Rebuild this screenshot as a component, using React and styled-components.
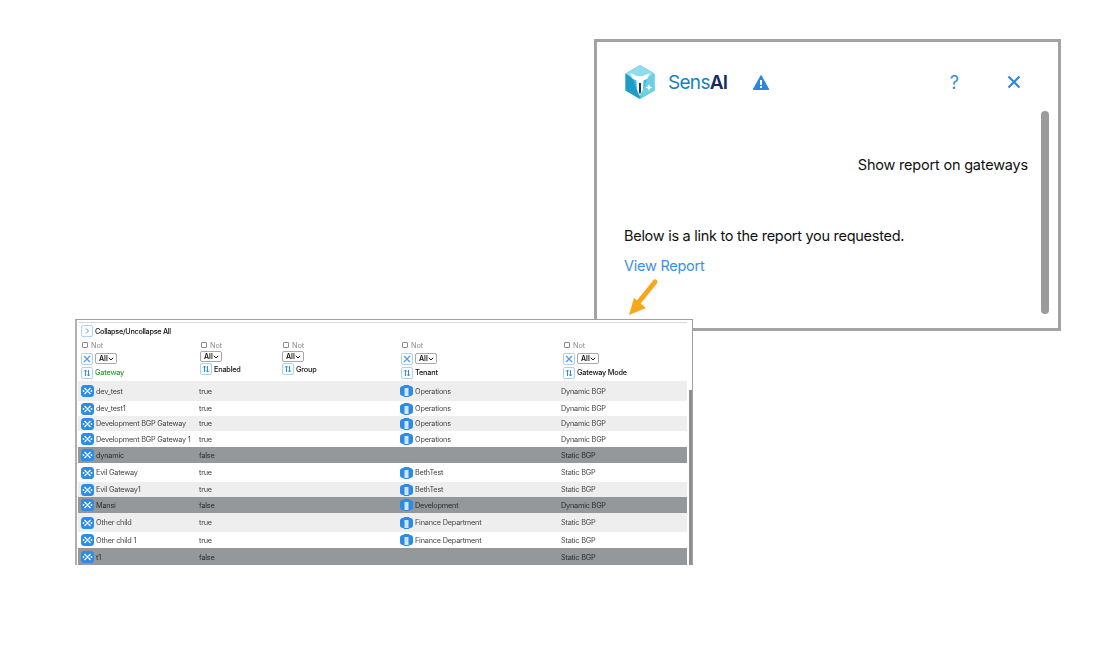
import React from "react";
import styled, { createGlobalStyle } from "styled-components";

const GATEWAYS = [
  { name: "dev_test", enabled: "true", tenant: "Operations", mode: "Dynamic BGP", h: 20, tone: "light" },
  { name: "dev_test1", enabled: "true", tenant: "Operations", mode: "Dynamic BGP", h: 15, tone: "white" },
  { name: "Development BGP Gateway", enabled: "true", tenant: "Operations", mode: "Dynamic BGP", h: 15, tone: "light" },
  { name: "Development BGP Gateway 1", enabled: "true", tenant: "Operations", mode: "Dynamic BGP", h: 16, tone: "white" },
  { name: "dynamic", enabled: "false", tenant: "", mode: "Static BGP", h: 16, tone: "dark" },
  { name: "Evil Gateway", enabled: "true", tenant: "BethTest", mode: "Static BGP", h: 19, tone: "white" },
  { name: "Evil Gateway1", enabled: "true", tenant: "BethTest", mode: "Static BGP", h: 15, tone: "light" },
  { name: "Mansi", enabled: "false", tenant: "Development", mode: "Dynamic BGP", h: 16, tone: "dark" },
  { name: "Other child", enabled: "true", tenant: "Finance Department", mode: "Static BGP", h: 19, tone: "light" },
  { name: "Other child 1", enabled: "true", tenant: "Finance Department", mode: "Static BGP", h: 16, tone: "white" },
  { name: "t1", enabled: "false", tenant: "", mode: "Static BGP", h: 18, tone: "dark" },
];

const TONES = { light: "#eeeeee", white: "#ffffff", dark: "#95989a" };
const COLUMNS = "121px 82px 118px 162px 126px";

const GlobalStyle = createGlobalStyle`
  html, body {
    margin: 0;
    background: #ffffff;
    font-family: Inter, "Liberation Sans", sans-serif;
  }
`;

const Page = styled.div`
  position: relative;
  box-sizing: border-box;
  width: 1113px;
  height: 656px;
  padding: 39px 0 0 594px;
  overflow: hidden;
`;

const Panel = styled.section`
  position: relative;
  box-sizing: border-box;
  width: 467px;
  height: 292px;
  border: 3px solid #a3a3a3;
  padding: 23px 30px 0 27px;
  background: #ffffff;
`;

const Header = styled.header`
  display: flex;
  align-items: center;
  height: 34px;
`;

const LogoMark = styled.svg`
  flex: none;
  width: 30px;
  height: 34px;
  margin-left: 1px;
`;

const Brand = styled.div`
  margin-left: 13px;
  font-size: 19px;
  letter-spacing: -0.7px;
  color: #0f86b8;
`;

const BrandStrong = styled.span`
  font-weight: 600;
  color: #1b2a5c;
`;

const Warning = styled.svg`
  width: 16px;
  height: 15px;
  margin-left: 26px;
`;

const Help = styled.span`
  margin-left: auto;
  font-size: 18px;
  color: #2f8fe0;
`;

const Close = styled.svg`
  width: 14px;
  height: 14px;
  margin-left: 48px;
  margin-right: 7px;
`;

const Request = styled.p`
  margin: 57px 0 0;
  text-align: right;
  font-size: 14.5px;
  line-height: 18px;
  letter-spacing: -0.2px;
  color: #111111;
`;

const Answer = styled.p`
  margin: 53px 0 0;
  font-size: 14.5px;
  line-height: 18px;
  letter-spacing: -0.28px;
  color: #111111;
`;

const ReportLink = styled.a`
  display: block;
  margin-top: 12px;
  font-size: 14.5px;
  line-height: 18px;
  letter-spacing: -0.25px;
  color: #3b8fe3;
`;

const Scrollbar = styled.div`
  position: absolute;
  left: 444px;
  top: 69px;
  width: 8px;
  height: 203px;
  border-radius: 4px;
  background: #9b9b9b;
`;

const Pointer = styled.svg`
  position: absolute;
  left: 624px;
  top: 276px;
  width: 38px;
  height: 44px;
`;

const Shot = styled.figure`
  position: absolute;
  left: 75px;
  top: 319px;
  box-sizing: border-box;
  width: 618px;
  height: 246px;
  margin: 0;
  padding: 2px 5px 0 1px;
  background: #ffffff;
  border-top: 1px solid #a0a0a0;
  border-left: 2px solid #b0b0b0;
  border-right: 1px solid #a0a0a0;
  filter: blur(0.45px);
  font-size: 7.3px;
  color: #3a3a3a;
  overflow: hidden;
`;

const ShotTopLine = styled.div`
  height: 1px;
  background: #d8d8d8;
`;

const ShotScroll = styled.div`
  position: absolute;
  right: 0;
  top: 70px;
  bottom: 0;
  width: 3px;
  background: #8f8f8f;
`;

const CollapseRow = styled.div`
  display: flex;
  align-items: center;
  gap: 2px;
  height: 12px;
  margin: 2px 0 0 3px;
  font-weight: 500;
  color: #111111;
  letter-spacing: -0.3px;
`;

const Filters = styled.div`
  display: grid;
  grid-template-columns: ${COLUMNS};
  height: 41px;
  margin-top: 3px;
`;

const FilterCol = styled.div`
  display: flex;
  flex-direction: column;
  align-items: flex-start;
  padding-left: ${(p) => p.$indent}px;
`;

const Not = styled.label`
  display: flex;
  align-items: center;
  gap: 3px;
  height: 10px;
  padding-left: 1px;
  color: #8a8a8a;
`;

const NotBox = styled.span`
  box-sizing: border-box;
  width: 6px;
  height: 6px;
  border: 1px solid #8a8a8a;
  border-radius: 1px;
`;

const FilterLine = styled.div`
  display: flex;
  align-items: center;
  gap: 2px;
  height: ${(p) => p.$h}px;
`;

const SortLabel = styled.span`
  font-weight: 500;
  letter-spacing: -0.2px;
  color: ${(p) => (p.$active ? "#2e9a37" : "#111111")};
`;

const AllSelect = styled.span`
  box-sizing: border-box;
  display: flex;
  align-items: center;
  justify-content: space-between;
  width: 22px;
  height: 11px;
  padding: 0 2px 0 3px;
  border: 1px solid #a8a8a8;
  border-radius: 2px;
  font-weight: 600;
  font-size: 7px;
  color: #111111;
`;

const Chevron = styled.svg`
  width: 6px;
  height: 4px;
`;

const ToolButton = styled.span`
  box-sizing: border-box;
  display: flex;
  align-items: center;
  justify-content: center;
  flex: none;
  width: 12px;
  height: 12px;
  border: 1px solid #a9d3f7;
  border-radius: 2px;
  background: #ffffff;
`;

const ToolGlyph = styled.svg`
  width: 8px;
  height: 8px;
`;

const Row = styled.div`
  display: grid;
  grid-template-columns: ${COLUMNS};
  align-items: center;
  height: ${(p) => p.$h}px;
  background: ${(p) => TONES[p.$tone]};
  color: ${(p) => (p.$tone === "dark" ? "#2b2b2b" : "#454545")};
`;

const Cell = styled.div`
  display: flex;
  align-items: center;
  gap: 2px;
  padding-left: ${(p) => p.$indent || 0}px;
  white-space: nowrap;
  letter-spacing: -0.2px;
`;

const RowIcon = styled.svg`
  width: 13px;
  height: 12px;
  flex: none;
`;

const Logo = () => (
  <LogoMark viewBox="0 0 30 34">
    <path d="M15 0 29.5 8.5V25.5L15 34 .5 25.5V8.5Z" fill="#3fb9dc" />
    <path d="M15 0 29.5 8.5 22 14H8L.5 8.500Z" fill="#8fdcec" />
    <path d="M.5 8.5 8 14 15 34 .5 25.5Z" fill="#1d9cc9" />
    <path d="M22 14 29.5 8.5V25.5L15 34Z" fill="#6ccfe6" />
    <path d="M5 8 12 11H18L25 8 22 14 18.500 15.500 18 25 15 31 12 25 11.500 15.500 8 14Z" fill="#ffffff" />
    <path d="M14 18H16V27L15 29.500 14 27Z" fill="#12395f" />
    <path d="M24 19l1 2.5 2.5 1-2.5 1-1 2.5-1-2.5-2.500-1 2.500-1z" fill="#ffffff" />
  </LogoMark>
);

const GatewayIcon = () => (
  <RowIcon viewBox="0 0 13 12">
    <rect x="0" y="0" width="13" height="12" rx="3.5" fill="#2b8be6" />
    <path d="M3.500 3 5.500 5M9.500 3 7.500 5M3.500 9 5.500 7M9.500 9 7.500 7" stroke="#ffffff" strokeWidth="1.300" />
    <circle cx="6.500" cy="6" r="1.200" fill="#ffffff" />
    <circle cx="2.500" cy="6" r="0.900" fill="#ffffff" />
    <circle cx="10.500" cy="6" r="0.900" fill="#ffffff" />
  </RowIcon>
);

const TenantIcon = () => (
  <RowIcon viewBox="0 0 13 12">
    <rect x="0" y="1" width="13" height="10" rx="3" fill="#2b8be6" />
    <rect x="3.500" y="0" width="6" height="12" rx="1" fill="#2b8be6" />
    <rect x="4.500" y="3" width="4" height="8" fill="#cfe6fb" />
  </RowIcon>
);

const SortButton = () => (
  <ToolButton>
    <ToolGlyph viewBox="0 0 8 8">
      <path d="M2.500 7V1M1 2.500 2.500 1 4 2.500M5.500 1V7M4 5.500 5.500 7 7 5.500" fill="none" stroke="#2b8be6" strokeWidth="1" />
    </ToolGlyph>
  </ToolButton>
);

const CrossButton = () => (
  <ToolButton>
    <ToolGlyph viewBox="0 0 8 8">
      <path d="M1 1 7 7M7 1 1 7" stroke="#4a9be8" strokeWidth="1.200" />
    </ToolGlyph>
  </ToolButton>
);

const AllPicker = () => (
  <AllSelect>
    All
    <Chevron viewBox="0 0 6 4">
      <path d="M.8.8 3 3 5.200.8" fill="none" stroke="#222222" strokeWidth="1" />
    </Chevron>
  </AllSelect>
);

const FilterColumn = ({ label, indent, active, compact }) => (
  <FilterCol $indent={indent}>
    <Not>
      <NotBox />
      Not
    </Not>
    {compact ? (
      <>
        <FilterLine $h={13}>
          <AllPicker />
        </FilterLine>
        <FilterLine $h={12}>
          <SortButton />
          <SortLabel>{label}</SortLabel>
        </FilterLine>
      </>
    ) : (
      <>
        <FilterLine $h={17}>
          <CrossButton />
          <AllPicker />
        </FilterLine>
        <FilterLine $h={11}>
          <SortButton />
          <SortLabel $active={active}>{label}</SortLabel>
        </FilterLine>
      </>
    )}
  </FilterCol>
);

export default function App() {
  return (
    <>
      <GlobalStyle />
      <Page>
        <Panel>
          <Header>
            <Logo />
            <Brand>
              Sens<BrandStrong>AI</BrandStrong>
            </Brand>
            <Warning viewBox="0 0 16 15">
              <path d="M8 .5 15.800 14.500H.2Z" fill="#2a86e0" stroke="#2a86e0" strokeLinejoin="round" />
              <rect x="7" y="5" width="2" height="5" fill="#ffffff" />
              <rect x="7" y="11" width="2" height="2" fill="#ffffff" />
            </Warning>
            <Help>?</Help>
            <Close viewBox="0 0 14 14">
              <path d="M1.500 1.500 12.500 12.500M12.500 1.500 1.500 12.500" stroke="#2a86e0" strokeWidth="2.200" />
            </Close>
          </Header>
          <Request>Show report on gateways</Request>
          <Answer>Below is a link to the report you requested.</Answer>
          <ReportLink>View Report</ReportLink>
          <Scrollbar />
        </Panel>

        <Shot>
          <ShotTopLine />
          <CollapseRow>
            <ToolButton>
              <ToolGlyph viewBox="0 0 8 8">
                <path d="M3 1.500 5.500 4 3 6.500" fill="none" stroke="#4a9be8" strokeWidth="1" />
              </ToolGlyph>
            </ToolButton>
            Collapse/Uncollapse All
          </CollapseRow>
          <Filters>
            <FilterColumn label="Gateway" indent={3} active />
            <FilterColumn label="Enabled" indent={1} compact />
            <FilterColumn label="Group" indent={1} compact />
            <FilterColumn label="Tenant" indent={2} />
            <FilterColumn label="Gateway Mode" indent={2} />
          </Filters>
          {GATEWAYS.map((g) => (
            <Row key={g.name} $h={g.h} $tone={g.tone}>
              <Cell $indent={3}>
                <GatewayIcon />
                {g.name}
              </Cell>
              <Cell>{g.enabled}</Cell>
              <Cell />
              <Cell $indent={1}>
                {g.tenant && <TenantIcon />}
                {g.tenant}
              </Cell>
              <Cell>{g.mode}</Cell>
            </Row>
          ))}
          <ShotScroll />
        </Shot>

        <Pointer viewBox="0 0 38 44">
          <path d="M31 6 14 27" stroke="#f5a81c" strokeWidth="5" strokeLinecap="round" />
          <path d="M5 39 10 22 22 32Z" fill="#f5a81c" />
        </Pointer>
      </Page>
    </>
  );
}
